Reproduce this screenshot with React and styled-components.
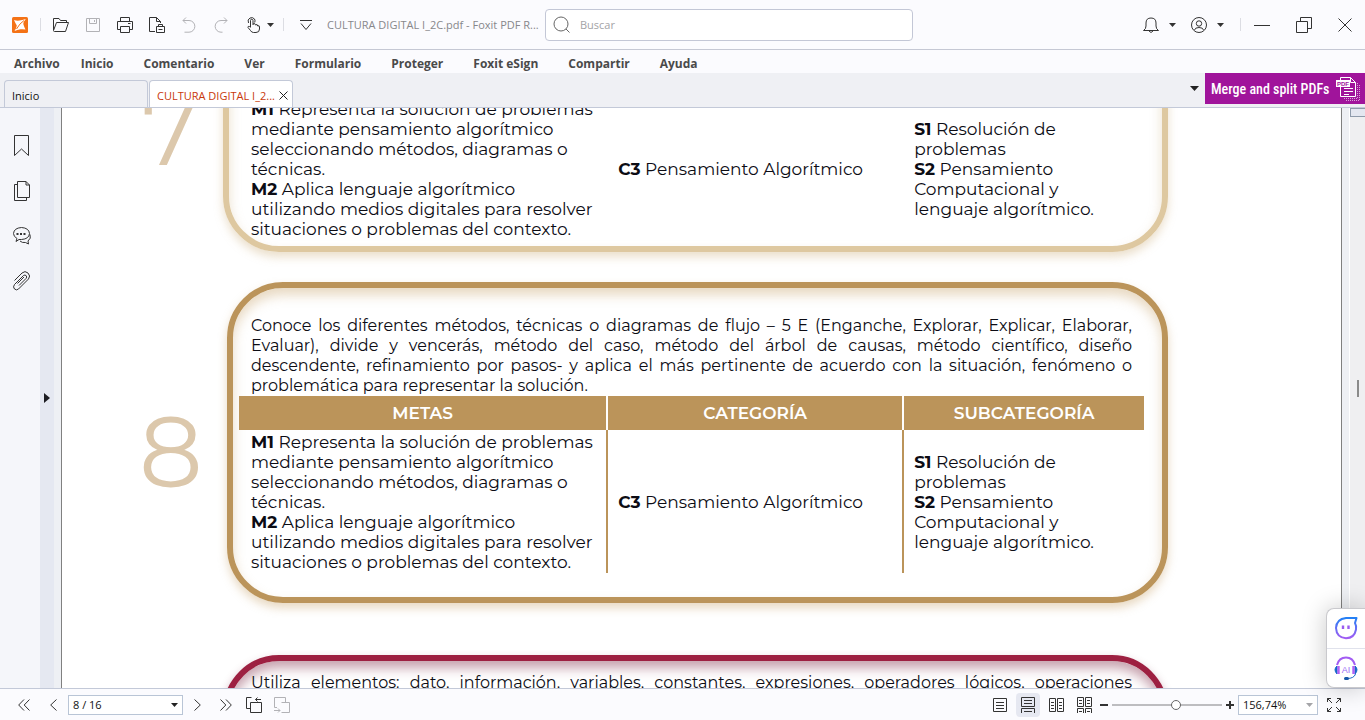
import React, { useState } from 'react';
import styled, { createGlobalStyle, css } from 'styled-components';

const GlobalStyle = createGlobalStyle`
    * { box-sizing: border-box; }
    body {
        margin: 0;
        font-family: 'Open Sans', 'Noto Sans', sans-serif;
        font-size: 12px;
        color: #222;
    }
    button, input, select { font: inherit; color: inherit; }
`;

const Window = styled.div`
    display: flex;
    flex-direction: column;
    height: 100vh;
    overflow: hidden;
    background: #fbfbfe;
`;

/* ---------- title bar ---------- */

const TitleBar = styled.header`
    display: flex;
    align-items: center;
    flex: none;
    height: 50px;
    border-bottom: 1px solid #c5c8d4;
`;
const Logo = styled.span`
    display: flex;
    justify-content: center;
    width: 40px;
`;
const Separator = styled.span`
    width: 1px;
    height: 13px;
    background: #dcdde3;
`;
const ToolGroup = styled.div`
    display: flex;
    align-items: center;
    padding-left: 4px;
`;
const IconButton = styled.button`
    display: flex;
    align-items: center;
    justify-content: center;
    gap: ${p => p.$gap || 0}px;
    width: ${p => p.$width || 32}px;
    height: 32px;
    padding: 0;
    border: 0;
    border-radius: 4px;
    background: transparent;
    color: ${p => (p.$muted ? '#b2b2b6' : '#333')};
    ${p => p.$active && css`
        height: 24px;
        background: #e6e8f1;
    `}
`;
const DocTitle = styled.span`
    width: 221px;
    padding-left: 3px;
    font-size: 11px;
    color: #87878b;
    white-space: nowrap;
`;
const SearchBox = styled.label`
    display: flex;
    align-items: center;
    flex: 0 1 368px;
    height: 32px;
    padding-left: 7px;
    gap: 7px;
    border: 1px solid #c3c7d6;
    border-radius: 4px;
    background: #fff;
    color: #666;
`;
const SearchInput = styled.input`
    flex: 1;
    min-width: 0;
    border: 0;
    outline: 0;
    background: none;
    font-size: 11px;
    &::placeholder { color: #a3a3a6; opacity: 1; }
`;
const WindowControls = styled.div`
    display: flex;
    align-items: center;
    margin-left: auto;
`;
const AccountTools = styled.div`
    display: flex;
    padding-right: 9px;
`;

/* ---------- menu and tabs ---------- */

const MenuBar = styled.nav`
    display: flex;
    align-items: center;
    flex: none;
    gap: 30px;
    height: 23px;
    padding: 4px 14px 0;
`;
const MenuItem = styled.button`
    padding: 0;
    border: 0;
    background: none;
    font-size: 12px;
    line-height: 20px;
    font-weight: 700;
    color: #4a4a4a;
    &:first-child { margin-right: -9px; }
`;
const TabStrip = styled.div`
    display: flex;
    align-items: flex-end;
    flex: none;
    gap: 1px;
    height: 35px;
    padding-left: 4px;
    border-bottom: 1px solid #c3c9d8;
    background: #eff0f4;
`;
const Tab = styled.div`
    display: flex;
    align-items: center;
    justify-content: space-between;
    width: 144px;
    height: 27px;
    padding: 3px 4px 0 7px;
    border: 1px solid #c3c9d8;
    border-bottom: 0;
    border-radius: 4px 4px 0 0;
    background: ${p => (p.$active ? '#fff' : '#eff0f4')};
`;
const TabLabel = styled.button`
    padding: 0;
    border: 0;
    background: none;
    font-size: 11px;
    color: ${p => (p.$active ? '#c8380a' : '#111')};
    white-space: nowrap;
`;
const CloseTab = styled.button`
    display: flex;
    padding: 0;
    border: 0;
    background: none;
`;
const StripEnd = styled.div`
    display: flex;
    align-items: center;
    align-self: flex-start;
    gap: 6px;
    height: 31px;
    margin-left: auto;
`;
const Banner = styled.a`
    display: flex;
    align-items: center;
    justify-content: space-between;
    width: 160px;
    height: 31px;
    padding: 0 5px 0 6px;
    background: #a0149b;
    color: #fff;
    font-family: 'Roboto Condensed', 'Open Sans Condensed', 'Open Sans', sans-serif;
    font-size: 14px;
    font-weight: 500;
    text-decoration: none;
    white-space: nowrap;
`;

/* ---------- work area ---------- */

const Workspace = styled.main`
    position: relative;
    display: flex;
    flex: 1;
    min-height: 0;
`;
const SideBar = styled.aside`
    display: flex;
    flex-direction: column;
    align-items: center;
    gap: 13px;
    width: 40px;
    padding: 22px 0 0 3px;
    background: #f5f6fa;
`;
const PanelToggle = styled.button`
    display: flex;
    align-items: center;
    justify-content: center;
    width: 14px;
    padding: 0;
    border: 0;
    background: #e5e8f1;
`;
const Viewport = styled.section`
    flex: 1;
    overflow: hidden;
    padding: 0 7px;
    background: #eef0f4;
`;
const Sheet = styled.article`
    height: calc(100% + 118px);
    margin-top: -118px;
    padding-right: 173px;
    border: solid #808080;
    border-width: 0 1px;
    overflow: hidden;
    background: #fff;
    color: #0c0c14;
    font-family: Montserrat, 'DejaVu Sans', sans-serif;
`;
const ScrollTrack = styled.div`
    width: 16px;
    border-left: 1px solid #fff;
    background: #efeff1;
`;
const ScrollThumb = styled.div`
    height: 9px;
    border: 1px solid #8f9bab;
    border-right: 0;
    background: #e4e7f0;
`;
const ScrollMark = styled.div`
    width: 2px;
    height: 17px;
    margin: 263px 0 0 7px;
    background: #8a8a8a;
`;

/* ---------- page content ---------- */

const Progression = styled.section`
    display: grid;
    grid-template-columns: 165px 1fr;
    margin-bottom: ${p => p.$space}px;
`;
const Numeral = styled.div`
    display: flex;
    align-items: center;
    justify-content: center;
    padding: 16px 0 0 53px;
    font-size: 100px;
    line-height: 100px;
    font-weight: 400;
    color: #dcc8ac;
`;
const tones = {
    sand: { line: '#dec8a0', glow: 'rgba(200, 165, 110, 0.36)' },
    gold: { line: '#bb945a', glow: 'rgba(200, 165, 110, 0.42)' },
    wine: { line: '#9d2041', glow: 'rgba(120, 30, 60, 0.42)' },
};
const Card = styled.div`
    margin-left: ${p => (p.$wide ? -4 : 0)}px;
    padding: ${p => p.$pad};
    border: 6px solid ${p => tones[p.$tone].line};
    border-radius: 56px;
    box-shadow: 0 5px 10px ${p => tones[p.$tone].glow}, inset 0 7px 12px ${p => tones[p.$tone].glow};
`;
const Statement = styled.p`
    margin: 0 12px;
    font-size: 16px;
    line-height: 20px;
`;
const Line = styled.span`
    display: block;
    white-space: nowrap;
    text-align: justify;
    text-align-last: ${p => (p.$last ? 'left' : 'justify')};
`;
const GoalTable = styled.table`
    width: 100%;
    table-layout: fixed;
    border-spacing: 0;
    font-size: 17px;
    line-height: 20px;
`;
const HeadCell = styled.th`
    width: ${p => p.$width};
    height: 34px;
    padding: 0;
    border-right: 2px solid #fff;
    background: #bb945a;
    color: #fff;
    font-size: 17px;
    font-weight: 600;
    &:last-child { border-right: 0; }
`;
const Cell = styled.td`
    width: ${p => p.$width};
    height: 143px;
    padding: 0 8px 0 10px;
    border-right: 2px solid ${p => (p.$ruled ? '#bb945a' : 'transparent')};
    vertical-align: middle;
    &:first-child { padding-left: 12px; }
    &:last-child { padding-right: 32px; border-right: 0; }
`;
const Entry = styled.div`
    b { font-weight: 700; }
`;

/* ---------- assistant ---------- */

const Assistant = styled.div`
    position: absolute;
    right: 0;
    bottom: 0;
    display: flex;
    flex-direction: column;
    width: 39px;
    height: 80px;
    border: 1px solid #c9c9cd;
    border-right: 0;
    border-radius: 8px 0 0 8px;
    background: #fff;
    box-shadow: 0 0 24px rgba(0, 0, 0, 0.22);
`;
const AssistantButton = styled.button`
    display: flex;
    align-items: center;
    justify-content: center;
    flex: 1;
    padding: 0;
    border: 0;
    background: none;
    & + & { border-top: 1px solid #e0e2ec; }
`;

/* ---------- status bar ---------- */

const StatusBar = styled.footer`
    display: flex;
    align-items: center;
    flex: none;
    height: 32px;
    border-top: 1px solid #c3c9d8;
    background: #fbfbfe;
`;
const PageNav = styled.div`
    display: flex;
    align-items: center;
    padding-left: 9px;
`;
const ViewTools = styled.div`
    display: flex;
    align-items: center;
    gap: 4px;
    margin-left: auto;
    padding-right: 19px;
`;
const Picker = styled.span`
    display: grid;
    align-items: center;
    width: ${p => p.$width}px;
    height: 20px;
    border: 1px solid #b9c5d6;
    background: #fff;
    color: ${p => (p.$muted ? '#a5a5a8' : '#222')};
    > * { grid-area: 1 / 1; }
    > svg { justify-self: end; margin-right: 4px; pointer-events: none; }
`;
const Select = styled.select`
    appearance: none;
    width: 100%;
    height: 18px;
    padding: 0 4px;
    border: 0;
    outline: 0;
    background: none;
    color: #111;
    font-size: 11px;
`;
const ZoomSlider = styled.input`
    appearance: none;
    width: 110px;
    height: 12px;
    margin: 0;
    background: linear-gradient(#bdbdc0, #bdbdc0) center / 100% 2px no-repeat;
    &::-webkit-slider-thumb {
        appearance: none;
        width: 10px;
        height: 10px;
        border: 1px solid #666;
        border-radius: 50%;
        background: #fff;
    }
`;

/* ---------- icons ---------- */

const Icon = ({ w = 16, h = 16, children, ...rest }) => (
    <svg width={w} height={h} viewBox={`0 0 ${w} ${h}`} fill="none" stroke="currentColor" aria-hidden="true" {...rest}>
        {children}
    </svg>
);
const Caret = ({ w = 7, h = 4 }) => (
    <Icon w={w} h={h}><path d={`M0 0H${w}L${w / 2} ${h}Z`} fill="currentColor" stroke="none" /></Icon>
);
const FoxitIcon = () => (
    <Icon stroke="none">
        <rect width="16" height="16" rx="1.5" fill="#f47216" />
        <path d="M2 3Q5 4 7.500 3.500Q10 3 13.800 2Q11.500 4.500 11.300 7Q12 9.500 13.500 12.500Q10.500 12 8.500 12.300Q5 13 2.500 14Q4.500 11.500 4.800 8.500Q3.500 6.500 2 3Z" fill="#fff" />
        <path d="M12 3.500Q7.500 6.500 4.500 12" stroke="#f47216" strokeWidth="1" />
    </Icon>
);
const OpenIcon = () => (
    <Icon><path d="M.5 13V1.500H6L7.500 3.500H13.500V5.500M.5 13.500L3.500 5.500H15.500L12.500 14.500H1.500Q.5 14.500.5 13.500Z" /></Icon>
);
const SaveIcon = () => (
    <Icon><path d="M1.500 1.500H14.500V14.500H1.500ZM4.500 1.500V6.500H11.500V1.500M9.500 3V5" /></Icon>
);
const PrintIcon = () => (
    <Icon><path d="M3.500 4.500V.5H12.500V4.500M3.500 12.500H.5V4.500H15.500V12.500H12.500M3.500 9.500H12.500V15.500H3.500ZM11 6.500H13.500" /></Icon>
);
const PageSetupIcon = () => (
    <Icon><path d="M6 14.500H.5V.5H7.500L11.500 4.500V6M7.500.5V4.500H11.500M7.500 9.500H15.500V15.500H7.500ZM9.500 9.500V7.500H13.500V9.500M9.500 12.500H13.500" /></Icon>
);
const UndoIcon = () => (
    <Icon><path d="M2 3.500H8A5.800 5.800 0 0 1 8 15.200H3.500M5 .5L2 3.500L5 6.500" /></Icon>
);
const RedoIcon = () => (
    <Icon><path d="M14 3.500H8A5.800 5.800 0 0 0 8 15.200H9.500M11 .5L14 3.500L11 6.500" /></Icon>
);
const HandIcon = () => (
    <Icon><path d="M4.500 10V3.500A1.200 1.200 0 0 1 7 3.500V8M7 7Q9 5.500 9.500 8Q11.500 6.500 11.700 9Q13.500 8 13.500 10V12Q13.500 15.500 10 15.500H7.500Q5.500 15.500 4.500 13.500L2 10.500Q1.800 8.800 3.500 9.500L4.500 10.500M2.500 6Q1 2.500 4 1Q6.500-.2 8.500 2Q9.500 3.800 8.700 5.500" /></Icon>
);
const CustomizeIcon = () => <Icon w={14} h={12}><path d="M1 1.500H13M2 4.500L7 10.500L12 4.500" /></Icon>;
const SearchIcon = () => <Icon w={18} h={18}><circle cx="8" cy="8" r="7" /><path d="M13 13L16.500 16.500" /></Icon>;
const BellIcon = () => (
    <Icon><path d="M.5 13.500Q3 12 3 9V6Q3 1 8 1Q13 1 13 6V9Q13 12 15.500 13.500ZM6 14Q8 17 10 14" /></Icon>
);
const UserIcon = () => (
    <Icon><circle cx="8" cy="8" r="7.500" /><circle cx="8" cy="6.500" r="2.700" /><path d="M3.500 13Q4 10.500 8 10.500Q12 10.500 12.500 13" /></Icon>
);
const MinimizeIcon = () => <Icon><path d="M0 8.500H16" /></Icon>;
const RestoreIcon = () => <Icon><path d="M.5 4.500H11.500V15.500H.5ZM4.500 4.500V.5H15.500V11.500H11.500" /></Icon>;
const CloseIcon = ({ size = 14 }) => <Icon w={size} h={size}><path d={`M.5.5L${size - 0.5} ${size - 0.5}M${size - 0.5}.5L.5 ${size - 0.5}`} /></Icon>;
const PdfIcon = () => (
    <Icon w={24} h={24}>
        <path d="M4.500 3V.5H14.500L19.500 5.500V19.500H4.500V10M14.500.5V5.500H19.500M8 11.500H17M8 14.500H17M8 17.500H13" />
        <rect x="0" y="3" width="14" height="7" fill="#fff" stroke="none" />
        <text x="1" y="9" fontSize="6" fontWeight="700" fontFamily="Liberation Sans, sans-serif" fill="#a0149b" stroke="none">PDF</text>
        <path d="M21.500 6V21.500H7M23.500 8V23.500H9" strokeDasharray="1 1" opacity=".6" />
    </Icon>
);
const BookmarkIcon = () => <Icon w={16} h={22}><path d="M.5.5H14.500V20.500L7.500 14L.5 20.500Z" /></Icon>;
const PagesIcon = () => <Icon w={16} h={20}><path d="M3.500 3.500H.5V19.500H12.500V16.500M3.500.5H12L15.500 4V16.500H3.500ZM12 .5V4H15.500" /></Icon>;
const CommentsIcon = () => (
    <Icon w={18} h={18}>
        <path d="M3 14.500L4 11.500Q.5 9.500.5 6.500Q1 1 8.500.5Q16 1 16.500 6.500Q16 12 8.500 12.500H6ZM17 7.500Q18.500 11.500 15 14L15.500 17L12.500 15.500Q9 16 7 14" />
        <path d="M3.500 7H13" strokeWidth="2" strokeDasharray="2 1.500" />
    </Icon>
);
const ClipIcon = () => (
    <Icon w={18} h={20}><path d="M1.500 9.500L9 2Q12-.8 15 2Q18 5 15.500 8L5.500 18Q3.500 19.800 1.500 18Q-.5 16 1.500 13.500L10.500 4.500Q12 3.500 13.200 4.700Q14.400 6 13 7.500L6 14.500M4.500 12.500L11 6" /></Icon>
);
const ArrowRight = () => <Icon w={6} h={10}><path d="M0 0L6 5L0 10Z" fill="#1c1c22" stroke="none" /></Icon>;
const Chevron = ({ flip, double }) => (
    <Icon w={double ? 12 : 7} h={12} transform={flip ? 'scale(-1 1)' : undefined}>
        <path d={double ? 'M6 .5L.7 6L6 11.500M11.500.5L6.200 6L11.500 11.500' : 'M6.500.5L.7 6L6.500 11.500'} />
    </Icon>
);
const PrevViewIcon = () => <Icon><path d="M4.500 5.500H15.500V15.500H4.500ZM4.500 11.500H.5V.5H5.500M15 2.500H9.500M11.500.5L9.500 2.500L11.500 4.500" /></Icon>;
const NextViewIcon = () => <Icon><path d="M7.500 5.500H15.500V15.500H7.500M11.500 5.500V.5H.5V10.500H3M0 13.500H6M4 11.500L6 13.500L4 15.500" /></Icon>;
const SingleIcon = () => <Icon w={14}><path d="M.5 1.500H13.500V14.500H.5ZM3 5.500H11M3 8.500H11M3 11.500H11" /></Icon>;
const ContinuousIcon = () => <Icon w={14}><path d="M.5.5V9.500H13.500V.5ZM3 3.500H11M3 6.500H11M.5 16V11.500H13.500V16M3 14.500H11" /></Icon>;
const FacingIcon = () => <Icon w={15}><path d="M.5 1.500H6.500V14.500H.5ZM8.500 1.500H14.500V14.500H8.500ZM2 5.500H5M2 8.500H5M2 11.500H5M10 5.500H13M10 8.500H13M10 11.500H13" /></Icon>;
const FacingContinuousIcon = () => <Icon w={15}><path d="M.5.5H6.500V9.500H.5ZM8.500.5H14.500V9.500H8.500ZM2 3.500H5M2 6.500H5M10 3.500H13M10 6.500H13M.5 16V11.500H6.500V16M8.500 16V11.500H14.500V16M2 14.500H5M10 14.500H13" /></Icon>;
const MinusIcon = () => <Icon w={8} h={8} strokeWidth="2"><path d="M0 4H8" /></Icon>;
const PlusIcon = () => <Icon w={8} h={8} strokeWidth="2"><path d="M0 4H8M4 0V8" /></Icon>;
const FullScreenIcon = () => <Icon w={14} h={14}><path d="M.5 4V.5H4M.5.5L5 5M10 .5H13.500V4M13.500.5L9 5M.5 10V13.500H4M.5 13.500L5 9M10 13.500H13.500V10M13.500 13.500L9 9" /></Icon>;
const ChatBotIcon = () => (
    <Icon w={24} h={24}>
        <defs>
            <linearGradient id="bot" x1="0" y1="0" x2="0" y2="1">
                <stop offset="0" stopColor="#2380f5" />
                <stop offset="1" stopColor="#a25cf3" />
            </linearGradient>
        </defs>
        <path d="M12 2H22.500L21 7Q22.500 9.500 22 13.500Q20.500 22 12 22.300Q2.500 21.500 2 12Q2.500 3 12 2Z" stroke="url(#bot)" strokeWidth="2" strokeLinejoin="round" />
        <path d="M9 9.500V13M14.500 9.500V13" stroke="#9b5cf0" strokeWidth="2.400" />
    </Icon>
);
const HeadsetIcon = () => (
    <Icon w={24} h={24}>
        <path d="M3 9Q5 1.500 12 1.500Q19 1.500 21 9" stroke="#a25cf3" strokeWidth="2" />
        <path d="M3 10Q-1 13.500 3 18ZM21 10Q25 13.500 21 18Z" fill="#1767c9" stroke="#1767c9" />
        <path d="M4.500 10V18M19.500 10V18" stroke="#b061f5" strokeWidth="2.400" />
        <path d="M21.500 18Q20 22.500 13 22.500" stroke="#1767c9" />
        <rect x="10" y="21" width="5" height="3" rx="1.500" fill="#1556a8" stroke="none" />
        <text x="12" y="17" textAnchor="middle" fontSize="9" fontFamily="Liberation Sans, sans-serif" fill="#9b6cf5" stroke="none">AI</text>
    </Icon>
);

/* ---------- data ---------- */

const menu = ['Archivo', 'Inicio', 'Comentario', 'Ver', 'Formulario', 'Proteger', 'Foxit eSign', 'Compartir', 'Ayuda'];

const tools = [
    { name: 'Abrir', icon: OpenIcon },
    { name: 'Guardar', icon: SaveIcon, muted: true },
    { name: 'Imprimir', icon: PrintIcon },
    { name: 'Configurar página', icon: PageSetupIcon },
    { name: 'Deshacer', icon: UndoIcon, muted: true },
    { name: 'Rehacer', icon: RedoIcon, muted: true },
];

const panels = [
    { name: 'Marcadores', icon: BookmarkIcon },
    { name: 'Páginas', icon: PagesIcon },
    { name: 'Comentarios', icon: CommentsIcon },
    { name: 'Adjuntos', icon: ClipIcon },
];

const views = [
    { name: 'Una página', icon: SingleIcon },
    { name: 'Continua', icon: ContinuousIcon },
    { name: 'Dos páginas', icon: FacingIcon },
    { name: 'Dos páginas continuas', icon: FacingContinuousIcon },
];

const statement8 = [
    'Conoce los diferentes métodos, técnicas o diagramas de flujo – 5 E (Enganche, Explorar, Explicar, Elaborar,',
    'Evaluar), divide y vencerás, método del caso, método del árbol de causas, método científico, diseño',
    'descendente, refinamiento por pasos- y aplica el más pertinente de acuerdo con la situación, fenómeno o',
    'problemática para representar la solución.',
];

const goals = [
    [
        ['M1', 'Representa la solución de problemas mediante pensamiento algorítmico seleccionando métodos, diagramas o técnicas.'],
        ['M2', 'Aplica lenguaje algorítmico utilizando medios digitales para resolver situaciones o problemas del contexto.'],
    ],
    [['C3', 'Pensamiento Algorítmico']],
    [
        ['S1', 'Resolución de problemas'],
        ['S2', 'Pensamiento Computacional y lenguaje algorítmico.'],
    ],
];
const columns = [
    { title: 'METAS', width: '40.8%' },
    { title: 'CATEGORÍA', width: '32.7%' },
    { title: 'SUBCATEGORÍA', width: '26.5%' },
];

function Goals({ head }) {
    return (
        <GoalTable>
            {head && (
                <thead>
                    <tr>{columns.map(c => <HeadCell key={c.title} $width={c.width}>{c.title}</HeadCell>)}</tr>
                </thead>
            )}
            <tbody>
                <tr>
                    {goals.map((entries, i) => (
                        <Cell key={columns[i].title} $width={columns[i].width} $ruled={head}>
                            {entries.map(([code, text]) => <Entry key={code}><b>{code}</b> {text}</Entry>)}
                        </Cell>
                    ))}
                </tr>
            </tbody>
        </GoalTable>
    );
}

export default function App() {
    const [view, setView] = useState('Continua');
    const [zoom, setZoom] = useState(59);

    return (
        <Window>
            <GlobalStyle />
            <TitleBar>
                <Logo><FoxitIcon /></Logo>
                <Separator />
                <ToolGroup>
                    {tools.map(({ name, icon: Glyph, muted }) => (
                        <IconButton key={name} aria-label={name} $muted={muted}><Glyph /></IconButton>
                    ))}
                    <IconButton aria-label="Mano" $width={46} $gap={5}><HandIcon /><Caret /></IconButton>
                </ToolGroup>
                <Separator />
                <ToolGroup>
                    <IconButton aria-label="Personalizar" $width={36}><CustomizeIcon /></IconButton>
                </ToolGroup>
                <DocTitle>CULTURA DIGITAL I_2C.pdf - Foxit PDF R...</DocTitle>
                <SearchBox>
                    <SearchIcon />
                    <SearchInput type="text" placeholder="Buscar" aria-label="Buscar" />
                </SearchBox>
                <WindowControls>
                    <AccountTools>
                        <IconButton aria-label="Notificaciones" $width={48} $gap={10}><BellIcon /><Caret /></IconButton>
                        <IconButton aria-label="Cuenta" $width={48} $gap={10}><UserIcon /><Caret /></IconButton>
                    </AccountTools>
                    <Separator />
                    <IconButton aria-label="Minimizar" $width={42}><MinimizeIcon /></IconButton>
                    <IconButton aria-label="Restaurar" $width={42}><RestoreIcon /></IconButton>
                    <IconButton aria-label="Cerrar" $width={40}><CloseIcon /></IconButton>
                </WindowControls>
            </TitleBar>

            <MenuBar>
                {menu.map(item => <MenuItem key={item}>{item}</MenuItem>)}
            </MenuBar>

            <TabStrip>
                <Tab><TabLabel>Inicio</TabLabel></Tab>
                <Tab $active>
                    <TabLabel $active>CULTURA DIGITAL I_2...</TabLabel>
                    <CloseTab aria-label="Cerrar pestaña"><CloseIcon size={9} /></CloseTab>
                </Tab>
                <StripEnd>
                    <Caret w={9} h={5} />
                    <Banner href="#">Merge and split PDFs <PdfIcon /></Banner>
                </StripEnd>
            </TabStrip>

            <Workspace>
                <SideBar>
                    {panels.map(({ name, icon: Glyph }) => (
                        <IconButton key={name} aria-label={name}><Glyph /></IconButton>
                    ))}
                </SideBar>
                <PanelToggle aria-label="Mostrar panel"><ArrowRight /></PanelToggle>
                <Viewport>
                    <Sheet>
                        <Progression $space={30}>
                            <Numeral>7</Numeral>
                            <Card $tone="sand" $wide $pad="101px 18px 6px 10px"><Goals /></Card>
                        </Progression>
                        <Progression $space={52}>
                            <Numeral>8</Numeral>
                            <Card $tone="gold" $pad="28px 18px 24px 6px">
                                <Statement>
                                    {statement8.map((line, i) => (
                                        <Line key={line} $last={i === statement8.length - 1}>{line}</Line>
                                    ))}
                                </Statement>
                                <Goals head />
                            </Card>
                        </Progression>
                        <Progression $space={0}>
                            <Numeral />
                            <Card $tone="wine" $wide $pad="12px 18px 120px 10px">
                                <Statement>
                                    <Line>Utiliza elementos: dato, información, variables, constantes, expresiones, operadores lógicos, operaciones</Line>
                                </Statement>
                            </Card>
                        </Progression>
                    </Sheet>
                </Viewport>
                <ScrollTrack>
                    <ScrollThumb />
                    <ScrollMark />
                </ScrollTrack>
                <Assistant>
                    <AssistantButton aria-label="Chat"><ChatBotIcon /></AssistantButton>
                    <AssistantButton aria-label="Asistente AI"><HeadsetIcon /></AssistantButton>
                </Assistant>
            </Workspace>

            <StatusBar>
                <PageNav>
                    <IconButton aria-label="Primera página" $width={30}><Chevron double /></IconButton>
                    <IconButton aria-label="Página anterior" $width={29}><Chevron /></IconButton>
                    <Picker $width={115}>
                        <Select aria-label="Página" defaultValue="8">
                            <option value="8">8 / 16</option>
                        </Select>
                        <Caret />
                    </Picker>
                    <IconButton aria-label="Página siguiente" $width={29}><Chevron flip /></IconButton>
                    <IconButton aria-label="Última página" $width={28}><Chevron double flip /></IconButton>
                    <IconButton aria-label="Vista anterior" $width={28}><PrevViewIcon /></IconButton>
                    <IconButton aria-label="Vista siguiente" $width={28} $muted><NextViewIcon /></IconButton>
                </PageNav>
                <ViewTools>
                    {views.map(({ name, icon: Glyph }) => (
                        <IconButton key={name} aria-label={name} $width={24} $active={name === view} onClick={() => setView(name)}>
                            <Glyph />
                        </IconButton>
                    ))}
                    <IconButton aria-label="Alejar" $width={8}><MinusIcon /></IconButton>
                    <ZoomSlider type="range" aria-label="Zoom" value={zoom} onChange={e => setZoom(e.target.value)} />
                    <IconButton aria-label="Acercar" $width={8}><PlusIcon /></IconButton>
                    <Picker $width={80} $muted>
                        <Select aria-label="Nivel de zoom" defaultValue="156">
                            <option value="156">156,74%</option>
                        </Select>
                        <Caret />
                    </Picker>
                    <IconButton aria-label="Pantalla completa" $width={24}><FullScreenIcon /></IconButton>
                </ViewTools>
            </StatusBar>
        </Window>
    );
}
